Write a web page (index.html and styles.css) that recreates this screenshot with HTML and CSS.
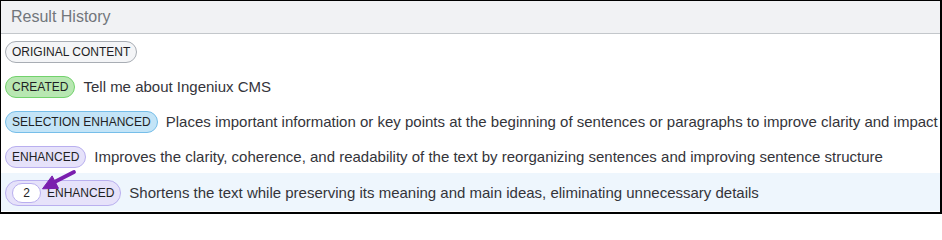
FILE: index.html
```html
<!DOCTYPE html>
<html>
<head>
<meta charset="utf-8">
<link rel="stylesheet" href="styles.css">
</head>
<body>
<div class="panel">
  <div class="header">Result History</div>
  <div class="row">
    <span class="badge badge-original">ORIGINAL CONTENT</span>
  </div>
  <div class="row">
    <span class="badge badge-created">CREATED</span>
    <span class="desc">Tell me about Ingeniux CMS</span>
  </div>
  <div class="row">
    <span class="badge badge-selection">SELECTION ENHANCED</span>
    <span class="desc">Places important information or key points at the beginning of sentences or paragraphs to improve clarity and impact</span>
  </div>
  <div class="row">
    <span class="badge badge-enhanced">ENHANCED</span>
    <span class="desc">Improves the clarity, coherence, and readability of the text by reorganizing sentences and improving sentence structure</span>
  </div>
  <div class="row row-active">
    <span class="badge badge-enhanced badge-count"><span class="count">2</span>ENHANCED</span>
    <span class="desc">Shortens the text while preserving its meaning and main ideas, eliminating unnecessary details</span>
    <svg class="arrow" width="42" height="24" viewBox="0 0 42 24">
      <line x1="37" y1="3" x2="17" y2="13.3" stroke="#7a1fae" stroke-width="3.8" stroke-linecap="round"/>
      <polygon points="5.5,19.8 15.1,6.9 21.5,19.3" fill="#7a1fae" stroke="#7a1fae" stroke-width="1" stroke-linejoin="round"/>
    </svg>
  </div>
</div>
</body>
</html>
```
FILE: styles.css
```css
* { box-sizing: border-box; }
html, body { margin: 0; padding: 0; background: #fff; }
body { font-family: "Liberation Sans", Arial, sans-serif; }
.panel {
  width: 942px;
  height: 214px;
  border-left: 1px solid #000;
  border-top: 1px solid #000;
  border-right: 2px solid #000;
  border-bottom: 2px solid #000;
  overflow: hidden;
}
.header {
  height: 33px;
  background: #f1f2f4;
  border-bottom: 1px solid #c3c7cb;
  color: #72767b;
  font-size: 16px;
  line-height: 32px;
  padding-left: 10px;
}
.row {
  height: 35px;
  display: flex;
  align-items: center;
  gap: 8px;
  padding-left: 4px;
  white-space: nowrap;
}
.row-active {
  position: relative;
  height: 38px;
  background: #eef6fd;
  margin-top: -1px;
  padding-top: 1px;
}
.badge {
  display: inline-flex;
  align-items: center;
  height: 22px;
  padding: 0 6px;
  border-radius: 12px;
  border: 1px solid;
  font-size: 12px;
  color: #1f1f24;
  line-height: 1;
}
.badge-original { background: #f4f5f7; border-color: #a8adb4; }
.badge-created { background: #b8e7b2; border-color: #72d26c; }
.badge-selection { background: #c3e4f7; border-color: #76bee9; }
.badge-enhanced { background: #e6e2fa; border-color: #b9afef; }
.badge-count {
  height: 26px;
  border-radius: 14px;
  padding: 0 6px 0 6px;
  gap: 6px;
}
.count {
  display: inline-flex;
  align-items: center;
  justify-content: center;
  width: 29px;
  height: 20px;
  background: #fff;
  border: 1px solid #b9afef;
  border-radius: 10px;
  font-size: 12px;
  color: #222;
}
.desc {
  font-size: 15px;
  color: #34343a;
}
.arrow {
  position: absolute;
  left: 36px;
  top: -4px;
}
```
